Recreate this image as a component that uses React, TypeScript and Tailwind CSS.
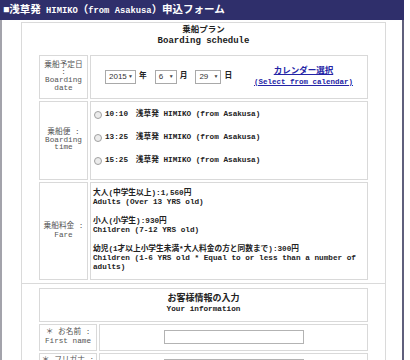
const cell = "border border-[#d9d9d9] bg-white";

function Sel({ w, v }: { w: string; v: string }) {
  return (
    <span
      className={`flex h-[14px] items-center justify-between border border-[#a9a9a9] bg-white pl-[3px] pr-[2px] font-['Liberation_Sans',sans-serif] text-[8px] font-normal text-[#333] ${w}`}
    >
      {v}
      <span className="text-[5px] text-[#444]">▼</span>
    </span>
  );
}

function Radio({ time }: { time: string }) {
  return (
    <div className="flex items-center h-[23px]">
      <span className="mr-[3px] h-[8px] w-[8px] rounded-full border border-[#a0a0a0] bg-[#ececec]" />
      <span className="whitespace-pre">{time}　浅草発 HIMIKO (from Asakusa)</span>
    </div>
  );
}

export default function App() {
  return (
    <div className="h-[360px] w-[410px] overflow-hidden bg-white font-['Liberation_Mono','Noto_Sans_CJK_JP',monospace] text-[7.7px] text-[#222]">
      <div className="h-[20px] w-[404px] whitespace-nowrap bg-[#2f2f6b] pl-[3px] text-[10.5px] font-bold leading-[21px] text-white">
        ■浅草発<span className="text-[8.8px]"> HIMIKO</span>（<span className="text-[8.8px]">from Asakusa</span>）申込フォーム
      </div>

      <div className="h-[340px] w-[404px] border-l-2 border-r-2 border-l-[#a3a3ab] border-r-[#5f5f7c] pt-[2px]">
        <div className="ml-[19px] w-[365px] border border-[#dadada]">
          <div className="px-[17px] pb-[3px]">
            <div className="pt-[2px] text-center font-bold leading-[11px]">
              <div className="text-[8.5px]">乗船プラン</div>
              <div className="text-[9px]">Boarding schedule</div>
            </div>

            <div className="mt-[8px] grid grid-cols-[49px_1fr] gap-[2px]">
              <div className={`${cell} flex h-[44px] flex-col items-center justify-center text-center leading-[7.7px] text-[#555]`}>
                <div>乗船予定日</div>
                <div>:</div>
                <div>Boarding</div>
                <div>date</div>
              </div>
              <div className={`${cell} flex items-center pl-[14px] pr-[14px] font-bold`}>
                <div className="flex items-center">
                  <Sel w="w-[31px]" v="2015" />
                  <span className="ml-[3px] mr-[8px]">年</span>
                  <Sel w="w-[22px]" v="6" />
                  <span className="ml-[3px] mr-[8px]">月</span>
                  <Sel w="w-[26px]" v="29" />
                  <span className="ml-[3px]">日</span>
                </div>
                <div className="ml-auto text-center leading-[11px] text-[#2424a6] underline">
                  <div className="text-[8.5px]">カレンダー選択</div>
                  <div className="text-[7.5px]">(Select from calendar)</div>
                </div>
              </div>

              <div className={`${cell} flex h-[79px] flex-col items-center justify-center text-center leading-[7.7px] text-[#555]`}>
                <div>乗船便 :</div>
                <div>Boarding</div>
                <div>time</div>
              </div>
              <div className={`${cell} flex flex-col justify-start pl-[3px] pt-[1px] font-bold`}>
                <Radio time="10:10" />
                <Radio time="13:25" />
                <Radio time="15:25" />
              </div>

              <div className={`${cell} flex flex-col items-center justify-center text-center leading-[8.5px] text-[#555]`}>
                <div>乗船料金 :</div>
                <div>Fare</div>
              </div>
              <div className={`${cell} px-[2px] pt-[6px] pb-[6px] font-bold leading-[9.3px]`}>
                <div>大人(中学生以上):1,560円</div>
                <div>Adults (Over 13 YRS old)</div>
                <div className="h-[9.3px]" />
                <div>小人(小学生):930円</div>
                <div>Children (7-12 YRS old)</div>
                <div className="h-[9.3px]" />
                <div>幼児(1才以上小学生未満*大人料金の方と同数まで):300円</div>
                <div>Children (1-6 YRS old * Equal to or less than a number of adults)</div>
              </div>
            </div>
          </div>

          <div className="border-t border-[#dadada] px-[17px] pt-[4px] pb-[10px]">
            <div className="grid grid-cols-[58px_1fr] gap-[2px]">
              <div className={`${cell} col-span-2 flex h-[34px] flex-col items-center justify-center font-bold leading-[9.5px]`}>
                <div className="text-[9px]">お客様情報の入力</div>
                <div>Your information</div>
              </div>

              <div className={`${cell} flex h-[27px] flex-col items-center justify-center leading-[9px] text-[#555]`}>
                <div>＊ お名前 :</div>
                <div>First name</div>
              </div>
              <div className={`${cell} flex items-center justify-center`}>
                <span className="h-[14px] w-[140px] border border-[#b3b3b3] bg-white" />
              </div>

              <div className={`${cell} flex h-[27px] flex-col items-center justify-start pt-[2px] leading-[9px] text-[#555]`}>
                <div>＊ フリガナ :</div>
                <div>Kana</div>
              </div>
              <div className={`${cell} flex items-center justify-center`}>
                <span className="h-[14px] w-[140px] border border-[#b3b3b3] bg-white" />
              </div>
            </div>
          </div>
        </div>
      </div>
    </div>
  );
}
